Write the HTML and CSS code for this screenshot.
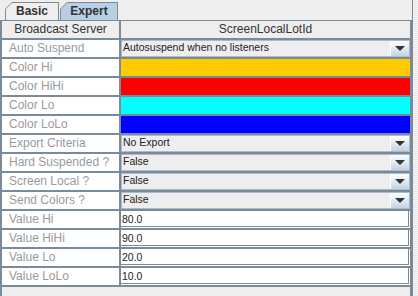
FILE: index.html
```html
<!DOCTYPE html>
<html>
    <head>
        <title>
            Properties
        </title>
        <link rel="stylesheet" href="styles.css">
    </head>
    <body>
        <div id="window">
            <div id="main">
                <div class="tabs">
                    <div class="tab tab-active"><span>Basic</span></div>
                    <div class="tab tab-off"><span>Expert</span></div>
                </div>
                <div class="pane">
                    <div class="grid">
                        <div class="head">Broadcast Server</div>
                        <div class="head">ScreenLocalLotId</div>

                        <div class="label">Auto Suspend</div>
                        <div class="combo"><span class="combo-text">Autosuspend when no listeners</span><span class="combo-btn"><i class="arrow"></i></span></div>

                        <div class="label">Color Hi</div>
                        <div class="swatch swatch-hi"></div>

                        <div class="label">Color HiHi</div>
                        <div class="swatch swatch-hihi"></div>

                        <div class="label">Color Lo</div>
                        <div class="swatch swatch-lo"></div>

                        <div class="label">Color LoLo</div>
                        <div class="swatch swatch-lolo"></div>

                        <div class="label">Export Criteria</div>
                        <div class="combo"><span class="combo-text">No Export</span><span class="combo-btn"><i class="arrow"></i></span></div>

                        <div class="label">Hard Suspended ?</div>
                        <div class="combo"><span class="combo-text">False</span><span class="combo-btn"><i class="arrow"></i></span></div>

                        <div class="label">Screen Local ?</div>
                        <div class="combo"><span class="combo-text">False</span><span class="combo-btn"><i class="arrow"></i></span></div>

                        <div class="label">Send Colors ?</div>
                        <div class="combo"><span class="combo-text">False</span><span class="combo-btn"><i class="arrow"></i></span></div>

                        <div class="label">Value Hi</div>
                        <div class="field">80.0</div>

                        <div class="label">Value HiHi</div>
                        <div class="field">90.0</div>

                        <div class="label">Value Lo</div>
                        <div class="field">20.0</div>

                        <div class="label">Value LoLo</div>
                        <div class="field">10.0</div>
                    </div>
                </div>
            </div>
            <div id="strip"></div>
        </div>
    </body>
</html>
```

FILE: styles.css
```css
body{
    margin: 0;
    background-color: #eeeeee;
    font-family: "Liberation Sans", Arial, sans-serif;
}
#window{
    display: flex;
    width: 418px;
    height: 296px;
}
#main{
    display: flex;
    flex-direction: column;
    width: 413px;
}
#strip{
    flex: 1;
    background: repeating-linear-gradient(0deg, #e6e6e6 0 1px, #f7f7f7 1px 2px);
}
.tabs{
    display: flex;
    align-items: flex-end;
    height: 20px;
    padding-left: 5px;
    border-right: 1px solid #7a8a99;
}
.tab{
    height: 18px;
    padding: 1px 1px 0 1px;
    box-sizing: border-box;
    background-color: #7a8a99;
    clip-path: polygon(0 7px, 7px 0, 100% 0, 100% 100%, 0 100%);
}
.tab span{
    display: flex;
    justify-content: center;
    height: 17px;
    line-height: 16px;
    font-size: 12px;
    font-weight: bold;
    color: #333333;
    clip-path: polygon(0 6px, 6px 0, 100% 0, 100% 100%, 0 100%);
}
.tab-active{
    width: 54px;
}
.tab-active span{
    background-color: #eeeeee;
}
.tab-off{
    width: 58px;
    margin-left: 1px;
}
.tab-off span{
    background-color: #b8cfe5;
}
.pane{
    flex: 1;
    border-top: 1px solid #7a8a99;
    border-left: 2px solid #7a8a99;
    border-right: 3px solid #7a8a99;
    background-color: #eeeeee;
}
.grid{
    display: grid;
    grid-template-columns: 117px 1fr;
    grid-auto-rows: 17px;
    gap: 2px;
    padding-bottom: 2px;
    background-color: #7a8a99;
}
.head{
    background-color: #eeeeee;
    color: #333333;
    font-size: 12px;
    line-height: 17px;
    text-align: center;
}
.label{
    background-color: white;
    color: #9a9a9a;
    font-size: 12px;
    line-height: 17px;
    padding-left: 7px;
}
.combo{
    display: flex;
    background-color: #eeeeee;
    border: 1px solid #a9bccf;
}
.combo-text{
    flex: 1;
    font-size: 10.5px;
    line-height: 13px;
    color: #222222;
    padding-left: 1px;
}
.combo-btn{
    display: flex;
    justify-content: center;
    align-items: center;
    width: 18px;
    border-left: 1px solid #ffffff;
    background: linear-gradient(#ffffff, #c3d3e3);
}
.arrow{
    width: 0;
    height: 0;
    border-left: 5px solid transparent;
    border-right: 5px solid transparent;
    border-top: 5px solid #333333;
}
.swatch-hi{
    background-color: #ffcc00;
}
.swatch-hihi{
    background-color: #ff0000;
}
.swatch-lo{
    background-color: #00ffff;
}
.swatch-lolo{
    background-color: #0000ff;
}
.field{
    background-color: white;
    color: #222222;
    font-size: 10.5px;
    line-height: 16px;
    padding-left: 1px;
    box-shadow: inset -1px -1px 0 #ffffff, inset -2px -2px 0 #7a8a99;
}
```
